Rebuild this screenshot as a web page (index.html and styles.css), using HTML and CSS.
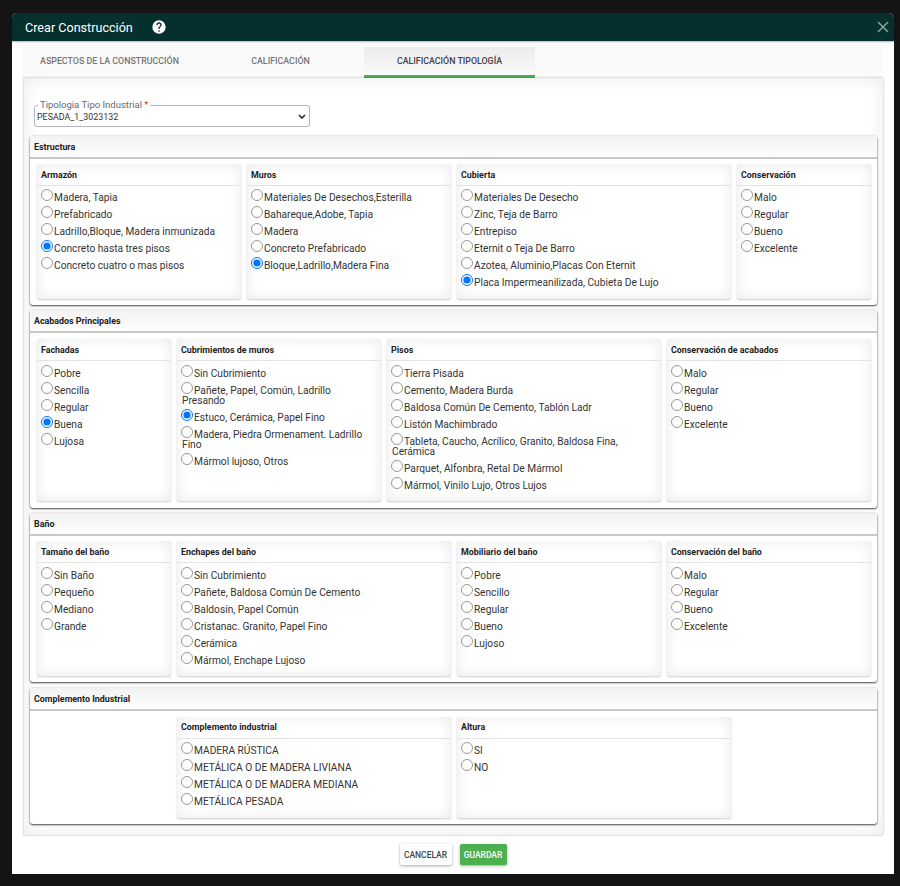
FILE: index.html
```html
<!DOCTYPE html>
<html lang="es">
<head>
<meta charset="utf-8">
<title>Crear Construcción</title>
<link rel="stylesheet" href="styles.css">
</head>
<body>
<div class="modal">
  <header class="modal-head">
    <h1>Crear Construcción</h1>
    <svg class="help" viewBox="0 0 24 24" width="16" height="16"><path fill="#fff" d="M12 2a10 10 0 1 0 0 20 10 10 0 0 0 0-20zm1 17h-2v-2h2v2zm2.07-7.75-.9.92C13.45 12.9 13 13.5 13 15h-2v-.5c0-1.1.45-2.1 1.17-2.83l1.24-1.26c.37-.36.59-.86.59-1.41 0-1.1-.9-2-2-2s-2 .9-2 2H8c0-2.21 1.79-4 4-4s4 1.79 4 4c0 .88-.36 1.68-.93 2.25z"/></svg>
    <svg class="close" viewBox="0 0 12 12" width="12" height="12"><path d="M1 1l10 10M11 1L1 11" stroke="#84a89f" stroke-width="1.5" fill="none"/></svg>
  </header>
  <nav class="tabs">
    <span class="tab t1">ASPECTOS DE LA CONSTRUCCIÓN</span>
    <span class="tab t2">CALIFICACIÓN</span>
    <span class="tab t3 active">CALIFICACIÓN TIPOLOGÍA</span>
  </nav>
  <main class="panel">
    <fieldset class="field">
      <legend>Tipologia Tipo Industrial <b>*</b></legend>
      <select><option>PESADA_1_3023132</option></select>
      <svg class="chev" viewBox="0 0 8 5" width="8" height="5"><path d="M1 1l3 3 3-3" stroke="#222" stroke-width="1.5" fill="none"/></svg>
    </fieldset>

    <section class="sec s1">
      <h2>Estructura</h2>
      <div class="grid">
        <div class="card c3"><h3>Armazón</h3>
          <label><input type="radio" name="a1">Madera, Tapia</label>
          <label><input type="radio" name="a1">Prefabricado</label>
          <label><input type="radio" name="a1">Ladrillo,Bloque, Madera inmunizada</label>
          <label><input type="radio" name="a1" checked>Concreto hasta tres pisos</label>
          <label><input type="radio" name="a1">Concreto cuatro o mas pisos</label>
        </div>
        <div class="card c3"><h3>Muros</h3>
          <label><input type="radio" name="a2">Materiales De Desechos,Esterilla</label>
          <label><input type="radio" name="a2">Bahareque,Adobe, Tapia</label>
          <label><input type="radio" name="a2">Madera</label>
          <label><input type="radio" name="a2">Concreto Prefabricado</label>
          <label><input type="radio" name="a2" checked>Bloque,Ladrillo,Madera Fina</label>
        </div>
        <div class="card c4"><h3>Cubierta</h3>
          <label><input type="radio" name="a3">Materiales De Desecho</label>
          <label><input type="radio" name="a3">Zinc, Teja de Barro</label>
          <label><input type="radio" name="a3">Entrepiso</label>
          <label><input type="radio" name="a3">Eternit o Teja De Barro</label>
          <label><input type="radio" name="a3">Azotea, Aluminio,Placas Con Eternit</label>
          <label><input type="radio" name="a3" checked>Placa Impermeanilizada, Cubieta De Lujo</label>
        </div>
        <div class="card c2"><h3>Conservación</h3>
          <label><input type="radio" name="a4">Malo</label>
          <label><input type="radio" name="a4">Regular</label>
          <label><input type="radio" name="a4">Bueno</label>
          <label><input type="radio" name="a4">Excelente</label>
        </div>
      </div>
    </section>

    <section class="sec s2">
      <h2>Acabados Principales</h2>
      <div class="grid">
        <div class="card c2"><h3>Fachadas</h3>
          <label><input type="radio" name="b1">Pobre</label>
          <label><input type="radio" name="b1">Sencilla</label>
          <label><input type="radio" name="b1">Regular</label>
          <label><input type="radio" name="b1" checked>Buena</label>
          <label><input type="radio" name="b1">Lujosa</label>
        </div>
        <div class="card c3"><h3>Cubrimientos de muros</h3>
          <label><input type="radio" name="b2">Sin Cubrimiento</label>
          <label><input type="radio" name="b2">Pañete, Papel, Común, Ladrillo Presando</label>
          <label><input type="radio" name="b2" checked>Estuco, Cerámica, Papel Fino</label>
          <label><input type="radio" name="b2">Madera, Piedra Ormenament. Ladrillo Fino</label>
          <label><input type="radio" name="b2">Mármol lujoso, Otros</label>
        </div>
        <div class="card c4"><h3>Pisos</h3>
          <label><input type="radio" name="b3">Tierra Pisada</label>
          <label><input type="radio" name="b3">Cemento, Madera Burda</label>
          <label><input type="radio" name="b3">Baldosa Común De Cemento, Tablón Ladr</label>
          <label><input type="radio" name="b3">Listón Machimbrado</label>
          <label><input type="radio" name="b3">Tableta, Caucho, Acrílico, Granito, Baldosa Fina, Cerámica</label>
          <label><input type="radio" name="b3">Parquet, Alfonbra, Retal De Mármol</label>
          <label><input type="radio" name="b3">Mármol, Vinilo Lujo, Otros Lujos</label>
        </div>
        <div class="card c3"><h3>Conservación de acabados</h3>
          <label><input type="radio" name="b4">Malo</label>
          <label><input type="radio" name="b4">Regular</label>
          <label><input type="radio" name="b4">Bueno</label>
          <label><input type="radio" name="b4">Excelente</label>
        </div>
      </div>
    </section>

    <section class="sec s3">
      <h2>Baño</h2>
      <div class="grid">
        <div class="card c2"><h3>Tamaño del baño</h3>
          <label><input type="radio" name="c1">Sin Baño</label>
          <label><input type="radio" name="c1">Pequeño</label>
          <label><input type="radio" name="c1">Mediano</label>
          <label><input type="radio" name="c1">Grande</label>
        </div>
        <div class="card c4"><h3>Enchapes del baño</h3>
          <label><input type="radio" name="c2">Sin Cubrimiento</label>
          <label><input type="radio" name="c2">Pañete, Baldosa Común De Cemento</label>
          <label><input type="radio" name="c2">Baldosín, Papel Común</label>
          <label><input type="radio" name="c2">Cristanac. Granito, Papel Fino</label>
          <label><input type="radio" name="c2">Cerámica</label>
          <label><input type="radio" name="c2">Mármol, Enchape Lujoso</label>
        </div>
        <div class="card c3"><h3>Mobiliario del baño</h3>
          <label><input type="radio" name="c3">Pobre</label>
          <label><input type="radio" name="c3">Sencillo</label>
          <label><input type="radio" name="c3">Regular</label>
          <label><input type="radio" name="c3">Bueno</label>
          <label><input type="radio" name="c3">Lujoso</label>
        </div>
        <div class="card c3"><h3>Conservación del baño</h3>
          <label><input type="radio" name="c4">Malo</label>
          <label><input type="radio" name="c4">Regular</label>
          <label><input type="radio" name="c4">Bueno</label>
          <label><input type="radio" name="c4">Excelente</label>
        </div>
      </div>
    </section>

    <section class="sec s4">
      <h2>Complemento Industrial</h2>
      <div class="grid">
        <div class="card c4 start3"><h3>Complemento industrial</h3>
          <label><input type="radio" name="d1">MADERA RÚSTICA</label>
          <label><input type="radio" name="d1">METÁLICA O DE MADERA LIVIANA</label>
          <label><input type="radio" name="d1">METÁLICA O DE MADERA MEDIANA</label>
          <label><input type="radio" name="d1">METÁLICA PESADA</label>
        </div>
        <div class="card c4"><h3>Altura</h3>
          <label><input type="radio" name="d2">SI</label>
          <label><input type="radio" name="d2">NO</label>
        </div>
      </div>
    </section>
  </main>
  <footer class="actions">
    <button class="btn cancel" type="button">CANCELAR</button>
    <button class="btn save" type="button">GUARDAR</button>
  </footer>
</div>
</body>
</html>
```

FILE: styles.css
```css
* { box-sizing: border-box; }
html, body { height: 100%; }
body {
  margin: 0;
  padding: 13px 6px 12px 12px;
  background: #141414;
  font-family: Roboto, "Liberation Sans", sans-serif;
  color: #333;
  overflow: hidden;
}
.modal {
  height: 861px;
  background: #fff;
  border-radius: 5px 5px 0 0;
  display: flex;
  flex-direction: column;
}
.modal-head {
  flex: none;
  height: 28px;
  background: #06302e;
  border-radius: 5px 5px 0 0;
  display: flex;
  align-items: center;
  padding: 0 5px 0 13px;
  box-shadow: 0 1px 2px rgba(0,0,0,.3);
}
.modal-head h1 {
  margin: 0;
  font-size: 12.6px;
  font-weight: 400;
  color: #fff;
}
.help { margin-left: 18px; }
.close { margin-left: auto; }
.tabs {
  flex: none;
  display: flex;
  margin: 6px 11px 0 10px;
  height: 31px;
  background: #fafafa;
}
.tab {
  display: flex;
  align-items: center;
  justify-content: center;
  padding-bottom: 3px;
  font-size: 8.85px;
  font-weight: 500;
  color: #757575;
}
.t1 { width: 175px; }
.t2 { width: 167px; }
.t3 { width: 171px; }
.tab.active {
  color: #424242;
  padding-bottom: 0;
  border-bottom: 3px solid #4caf50;
  background: linear-gradient(#ececec, #fafafa);
}
.panel {
  flex: none;
  height: 757px;
  margin: 0 11px 0 12px;
  padding: 22px 6px 0;
  background: #fff;
  box-shadow: inset 0 0 18px rgba(0,0,0,.09), 0 0 2px rgba(0,0,0,.35);
}
.field {
  position: relative;
  width: 276px;
  height: 27px;
  margin: 0 0 9px 4px;
  padding: 0 2px;
  border: 1px solid #b5b5bb;
  border-radius: 3px;
  background: transparent;
}
.field legend {
  margin-left: 1px;
  padding: 0 2px;
  font-size: 9.5px;
  line-height: 10px;
  color: #5f6b7a;
}
.field legend b { color: #d33; font-weight: 400; }
.field select {
  appearance: none;
  display: block;
  width: 100%;
  height: 16px;
  margin-top: -1px;
  padding: 0;
  border: 0;
  outline: 0;
  background: transparent;
  font: 8.9px Roboto, sans-serif;
  color: #333;
}
.chev {
  position: absolute;
  right: 3px;
  top: 4px;
}
.sec {
  margin-bottom: 5px;
  border-radius: 3px;
  background: #fff;
  box-shadow: 0 1px 2px rgba(0,0,0,.7), 0 0 2px rgba(0,0,0,.2);
}
.s1 { height: 169px; }
.s2 { height: 198px; }
.s3 { height: 169px; }
.s4 { height: 136px; margin-top: 6px; }
.sec h2 {
  margin: 0;
  height: 23px;
  padding: 0 4px;
  font-size: 8.9px;
  font-weight: 700;
  line-height: 22px;
  color: #222;
  background: linear-gradient(#f2f2f2, #fdfdfd);
  border-bottom: 2px solid #c8c8c8;
}
.s2 h2, .s3 h2, .s4 h2 { line-height: 23px; }
.grid {
  display: grid;
  grid-template-columns: repeat(12, 64px);
  column-gap: 6px;
  padding: 5px 6px 0 7px;
}
.s1 .grid, .s3 .grid { height: 140px; }
.s2 .grid { height: 168px; padding-top: 6px; }
.s4 .grid { height: 107px; padding-top: 6px; }
.card {
  padding: 0 5px;
  border-radius: 2px;
  background: #fff;
  box-shadow: inset 0 0 14px rgba(0,0,0,.09), 0 1px 2px rgba(0,0,0,.2);
}
.c2 { grid-column: span 2; }
.c3 { grid-column: span 3; }
.c4 { grid-column: span 4; }
.start3 { grid-column: 3 / span 4; }
.card h3 {
  margin: 0 -5px 7px;
  height: 22px;
  padding: 0 4px;
  font-size: 8.9px;
  font-weight: 700;
  line-height: 22px;
  color: #222;
  border-bottom: 1px solid #e4e4e4;
}
.s2 .card h3, .s3 .card h3 { margin-bottom: 8px; }
.s4 .card h3 { line-height: 21px; }
.card label {
  display: block;
  margin-bottom: 7px;
  font-size: 10.2px;
  line-height: 10px;
  color: #333;
}
.card input {
  width: 12px;
  height: 12px;
  margin: -4px 1px -4px -1px;
  vertical-align: 0;
}
.card input:not(:checked) { opacity: .75; }
.actions {
  flex: 1;
  display: flex;
  justify-content: center;
  align-items: center;
  gap: 8px;
}
.btn {
  height: 21px;
  border: 0;
  border-radius: 2px;
  font: 500 8.5px Roboto, sans-serif;
  padding: 0;
  box-shadow: 0 1px 3px rgba(0,0,0,.35);
}
.cancel { width: 52px; background: #fff; color: #424242; }
.save { width: 47px; background: #4caf50; color: #fff; }
```
